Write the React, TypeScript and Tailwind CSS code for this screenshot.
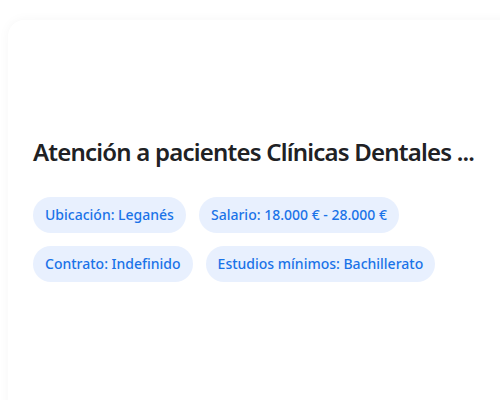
const chips = [
  'Ubicación: Leganés',
  'Salario: 18.000 € - 28.000 €',
  'Contrato: Indefinido',
  'Estudios mínimos: Bachillerato',
]

export default function App() {
  return (
    <div className="h-[400px] w-[500px] overflow-hidden bg-white font-['Noto_Sans',sans-serif]">
      <div className="ml-2 mt-5 h-[420px] w-[520px] rounded-2xl bg-white px-[25px] pt-[116px] shadow-[0_0_12px_rgba(0,0,0,0.04)]">
        <h2 className="whitespace-nowrap text-2xl font-semibold leading-8 tracking-[-0.033em] text-[#202124]">
          Atención a pacientes Clínicas Dentales ...
        </h2>
        <div className="mt-[29px] flex w-[440px] flex-wrap gap-[13px]">
          {chips.map((chip) => (
            <span
              key={chip}
              className="flex h-9 items-center rounded-full bg-[#e8f0fe] px-3 text-sm font-medium text-[#1a73e8]"
            >
              {chip}
            </span>
          ))}
        </div>
      </div>
    </div>
  )
}
